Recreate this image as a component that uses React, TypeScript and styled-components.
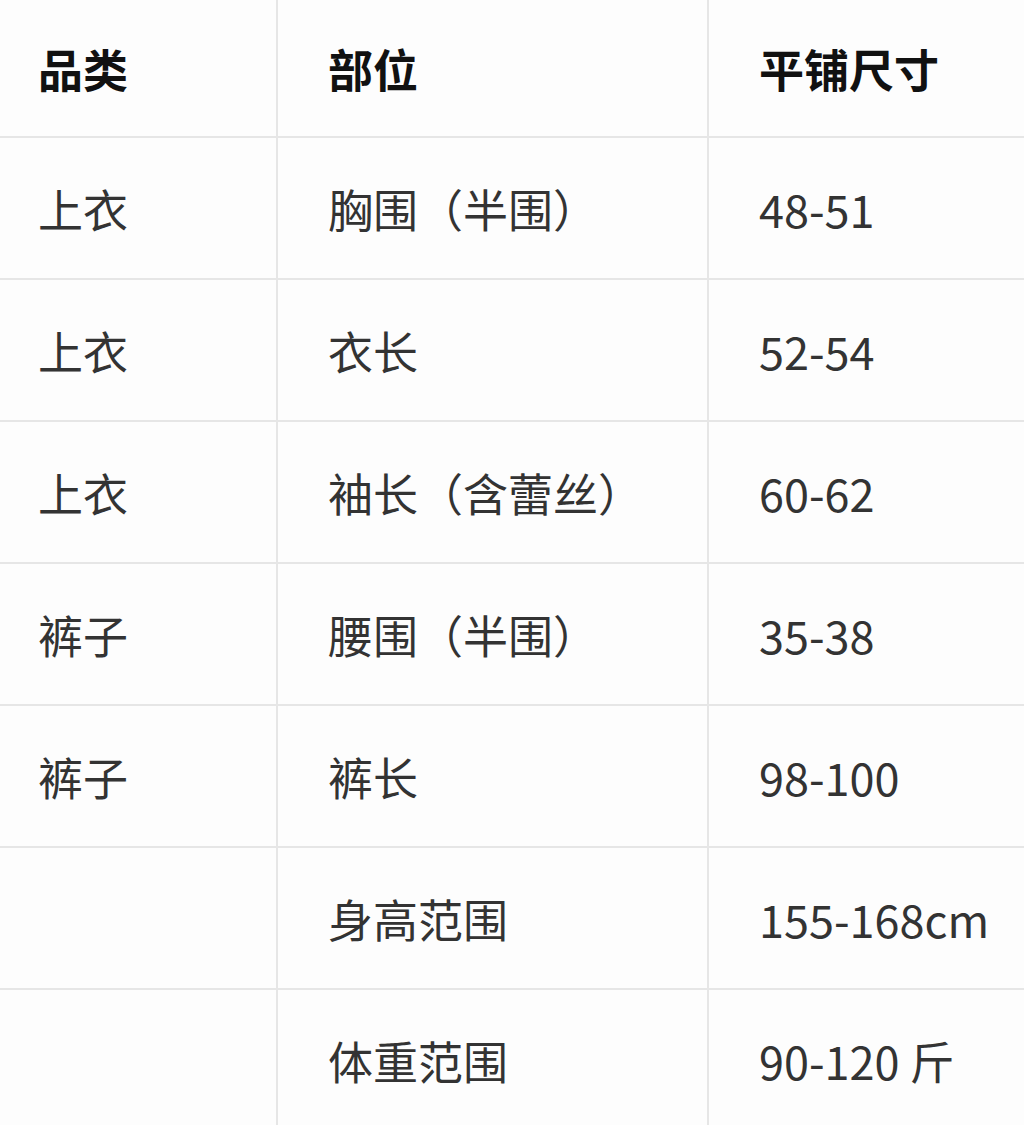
import React from "react";
import styled, { createGlobalStyle } from "styled-components";

const GlobalStyle = createGlobalStyle`
  html, body {
    margin: 0;
    padding: 0;
    background: #fdfdfd;
  }
  body {
    font-family: "Noto Sans CJK SC", "Noto Sans", sans-serif;
  }
`;

const Table = styled.table`
  width: 1024px;
  border-collapse: collapse;
  table-layout: fixed;
  background: #fdfdfd;
`;

const Col = styled.col<{ $w: number }>`
  width: ${(p) => p.$w}px;
`;

const HeadCell = styled.th<{ $first?: boolean }>`
  height: 136px;
  padding: 0 0 0 ${(p) => (p.$first ? 38 : 50)}px;
  text-align: left;
  font-size: 45px;
  font-weight: 700;
  color: #111;
  border-bottom: 2px solid #e6e6e6;
  border-left: ${(p) => (p.$first ? "none" : "2px solid #e6e6e6")};
  vertical-align: middle;
`;

const Cell = styled.td<{ $first?: boolean }>`
  height: 140px;
  padding: 0 0 0 ${(p) => (p.$first ? 38 : 50)}px;
  font-size: 45px;
  font-weight: 400;
  color: #333;
  border-bottom: 2px solid #e6e6e6;
  border-left: ${(p) => (p.$first ? "none" : "2px solid #e6e6e6")};
  vertical-align: middle;
  white-space: nowrap;
`;

const rows = [
  ["上衣", "胸围（半围）", "48-51"],
  ["上衣", "衣长", "52-54"],
  ["上衣", "袖长（含蕾丝）", "60-62"],
  ["裤子", "腰围（半围）", "35-38"],
  ["裤子", "裤长", "98-100"],
  ["", "身高范围", "155-168cm"],
  ["", "体重范围", "90-120 斤"],
];

const App = () => {
  return (
    <>
      <GlobalStyle />
      <Table>
        <colgroup>
          <Col $w={277} />
          <Col $w={431} />
          <Col $w={316} />
        </colgroup>
        <thead>
          <tr>
            <HeadCell $first>品类</HeadCell>
            <HeadCell>部位</HeadCell>
            <HeadCell>平铺尺寸</HeadCell>
          </tr>
        </thead>
        <tbody>
          {rows.map((r, i) => (
            <tr key={i}>
              <Cell $first>{r[0]}</Cell>
              <Cell>{r[1]}</Cell>
              <Cell>{r[2]}</Cell>
            </tr>
          ))}
        </tbody>
      </Table>
    </>
  );
};

export default App;
